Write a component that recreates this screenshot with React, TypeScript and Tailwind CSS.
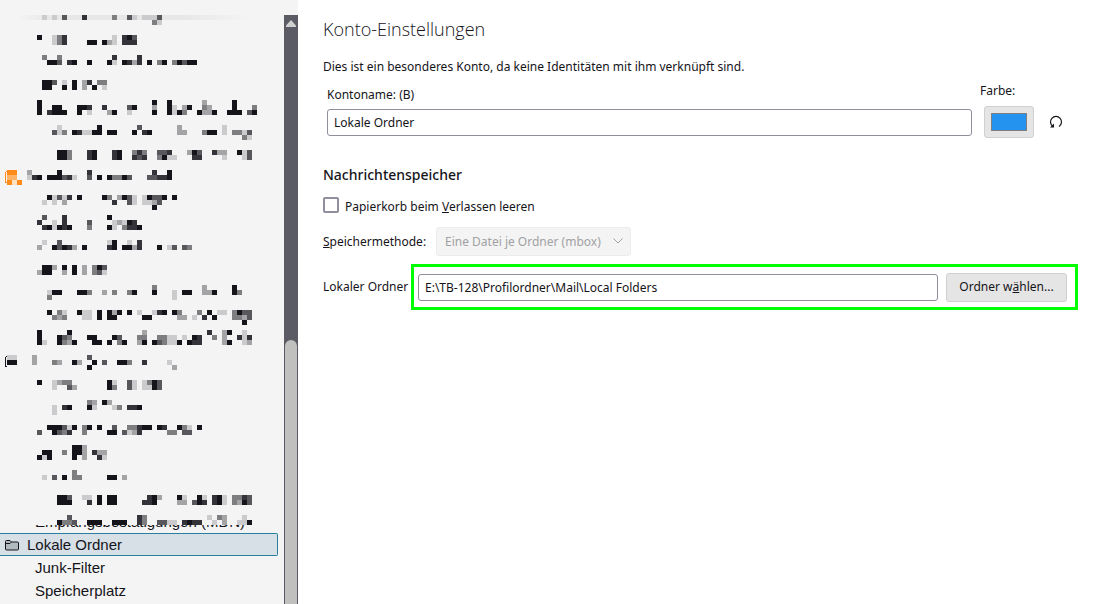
import { useState } from "react";

const shades: Record<string, string> = {
    a: "#15141a",
    b: "#343339",
    c: "#58575c",
    d: "#7e7e80",
    e: "#a4a4a6",
    f: "#cbcbcd",
    o: "#ff8c1a",
    p: "#ffb366",
    q: "#ffe0c2",
};

// One entry per mosaic row: [row, "column + shades ..."], every cell is 5 x 5
const mosaic: [number, string][] = [
    [0, "8f 10f 12c 16b 22d 25cf 28fff 31c"],
    [1, "30df"],
    [4, "7a 10fdb 22f 24bac"],
    [5, "10fdb 17aa 20aef 24bbb"],
    [8, "8d 11d 22b 27b"],
    [9, "9aac 13ba 17a 21af 24abeb 29a 31da 34dacaa"],
    [13, "8aac 12f 14a 16eb 19dd"],
    [14, "8aa 12a 14a 16e 18a 20f"],
    [17, "7a 30a 33a 40e 46a"],
    [18, "7a 10aa 15aab 20b 25ca 30e 33af 36ea 40de 46a 50d"],
    [19, "7a 9baaa 15a 17f 21ea 25f 30a 33afad 39aeea 45aaa 49ca"],
    [22, "11f 19a 27c 35e 44f"],
    [23, "10cfd 14abffaa 21aa 26a 28ba 35ee 40daa 44f 46ddfc"],
    [24, "48df"],
    [27, "11aad 17ba 22ba 26dbd 31ccb 37eac 42bee 47afc"],
    [28, "11aad 17ba 22ba 26bcb 31daff 38bb 44f 48fc"],
    [31, "1oo 5e 11a 17b 30b 33a"],
    [32, "1pp 5fba 9aaacbf 17c 19a 21addac 29ccbba"],
    [33, "1oqo"],
    [36, "9afcfb 15a 20ad 23eacf 28facca 34a"],
    [37, "8f 10f 12e 22b 25cf 28ffec"],
    [38, "30a"],
    [40, "8c 12b 21a"],
    [41, "7b 10f 12b 17c 22fefab"],
    [42, "8bafaba 17d 21af 24dbba"],
    [45, "8f 11c 21fa 25f 27b"],
    [46, "7e 10acabe 16a 21ba 24aaeb 31a 33fc 36cd"],
    [50, "8aae 12a 14a 16e 18dac"],
    [51, "7eaa 12e 14a 16e 18dcf"],
    [54, "30d 40e 46a"],
    [55, "9faa 15aad 20e 22d 25da 30a 34f 36aa 40eea 46ad"],
    [56, "9d 34f"],
    [59, "9a 11df 15aff 19a 21aea 25a 27f 30fba 34ad 39d 41a 43ff 46dacc"],
    [60, "10ded 16ff 19a 21aa 28aa 35ee 38f 40b 42a 46ddec"],
    [61, "48a"],
    [63, "7a 13a 28e 41b 44ea 48f"],
    [64, "7a 11acd 17aa 22ac 27dd 31ddff 36f 38ab 42d 44e 47bfb"],
    [65, "7af 11adea 18aa 21a 23da 27ea 30acdffa 37abb 44ea 48fe"],
    [68, "1ff 6e 17c"],
    [69, "1aa 6e 10de 14ae 18a 20c 23aad 28b 33f"],
    [70, "17a 34e"],
    [73, "7a 10fedd 21af 25cf 28fdac"],
    [74, "10f 13ce 21ad 25cf 28ffac"],
    [77, "17de 20ae"],
    [78, "10f 12ba 17af 22fd 25bba"],
    [79, "10f"],
    [82, "9aaacfa 16da 19a 22c 25ddbaa 31ab 35adf 39a"],
    [83, "7c 10acdb 16d 21aa 24cfeb 33dd 36cc"],
    [86, "14aae"],
    [87, "8aa 12d 14aae 18bee"],
    [88, "7afa 14a 16e 19bf"],
    [91, "14d"],
    [92, "8f 10c 12a 14dd 21aa 24e"],
    [96, "11aac 16ff 19a 21aa 29bae 35af 39af 42baf 46ddbc"],
    [97, "11aaa 17b 19a 21aa 28bba 35ee 38cab 42baf 46deac"],
    [100, "13c 27bd 41f 43de 48f"],
    [101, "11addc 17aaa 22aaa 27bd 31ccff 36babb 42f 44e 47ffa"],
];

const cells = mosaic.flatMap(([row, line]) =>
    line.split(" ").flatMap((run) => {
        const start = parseInt(run, 10);
        return run.replace(/\d+/, "").split("").map((shade, i) => ({ x: 2 + (start + i) * 5, y: row * 5, fill: shades[shade] }));
    })
);

function Mosaic() {
    return (
        <svg className="block shrink-0" width="278" height="510" shapeRendering="crispEdges" aria-hidden="true">
            <defs>
                <linearGradient id="band">
                    <stop offset="0" stopColor="#f4f4f4" />
                    <stop offset="0.15" stopColor="#e7e7e7" />
                    <stop offset="0.7" stopColor="#e7e7e7" />
                    <stop offset="1" stopColor="#f4f4f4" />
                </linearGradient>
            </defs>
            <rect x="17" y="0" width="235" height="5" fill="url(#band)" />
            {cells.map((c) => (
                <rect key={`${c.x}-${c.y}`} x={c.x} y={c.y} width="5" height="5" fill={c.fill} />
            ))}
            <path d="M7 156.500Q5.500 156.500 5.500 158V166Q5.500 167.500 7 167.500" fill="none" stroke="#ff8c1a" />
            <path d="M7 341.500Q5.500 341.500 5.500 343V350Q5.500 351.500 7 351.500" fill="none" stroke="#15141a" />
        </svg>
    );
}

function FolderIcon() {
    return (
        <svg className="shrink-0" width="14" height="12" viewBox="0 0 14 12" fill="#b1bac0" stroke="#15141a" aria-hidden="true">
            <path d="M.5 10v-7.500a1 1 0 0 1 1-1h3.500l1.500 1.500h6a1 1 0 0 1 1 1v6a1 1 0 0 1-1 1h-11a1 1 0 0 1-1-1z" />
            <path d="M.5 4.500h4.500l1.500-1.500" fill="none" />
        </svg>
    );
}

function Sidebar() {
    return (
        <aside className="flex w-[298px] shrink-0 bg-[#f4f4f4] pt-[15px]">
            <nav className="flex min-w-0 grow flex-col font-['Liberation_Sans',sans-serif] text-[15px] leading-[23px]">
                <Mosaic />
                {/* only the lower edge of this entry shows below the mosaic */}
                <div className="flex h-2 items-end overflow-hidden pl-[35px]">
                    <a href="#mdn" className="whitespace-nowrap">Empfangsbestätigungen (MDN)</a>
                </div>
                <a href="#lokal" className="mr-1.5 flex h-[23px] items-center gap-2 rounded-r-xs border border-l-0 border-[#2a7f9e] bg-[#d7e0e7] pl-[5px]">
                    <FolderIcon />
                    Lokale Ordner
                </a>
                <a href="#junk" className="pl-[35px]">Junk-Filter</a>
                <a href="#speicher" className="pl-[35px]">Speicherplatz</a>
            </nav>
            <div className="flex w-3.5 shrink-0 flex-col bg-[#5b5b66]">
                <svg className="mx-auto mt-[5px]" width="10" height="7" fill="#d0d0d0" aria-hidden="true">
                    <path d="M5 0L10 5.500V7H0V5.500z" />
                </svg>
                <div className="mx-px mt-[313px] grow rounded-t-md bg-[#c0c0bf]" />
            </div>
        </aside>
    );
}

export default function App() {
    const [name, setName] = useState("Lokale Ordner");
    const [folder, setFolder] = useState("E:\\TB-128\\Profilordner\\Mail\\Local Folders");
    const [color, setColor] = useState("#2493ef");

    return (
        <div className="flex h-screen overflow-hidden bg-white text-[#15141a]">
            <Sidebar />

            <main className="min-w-0 grow pt-[15px] pr-[33px] pl-[25px] font-['Noto_Sans',sans-serif] text-xs leading-5">
                <h1 className="font-['Open_Sans',sans-serif] text-[18px] leading-7 font-light">Konto-Einstellungen</h1>
                <p className="mt-3.5">Dies ist ein besonderes Konto, da keine Identitäten mit ihm verknüpft sind.</p>

                <div className="flex pr-3.5 pl-1">
                    <div className="flex grow flex-col pt-2">
                        <label htmlFor="name">Kontoname: (B)</label>
                        <input
                            id="name"
                            type="text"
                            value={name}
                            onChange={(e) => setName(e.target.value)}
                            className="mt-1 h-[27px] rounded-[3px] border border-[#8f8f9d] px-1.5 outline-none"
                        />
                    </div>
                    <div className="ml-2 flex flex-col pt-1">
                        <label htmlFor="color">Farbe:</label>
                        <div className="mt-[5px] flex items-center gap-3.5 pl-1">
                            <div className="flex h-8 w-[50px] items-center justify-center rounded-[3px] border border-[#d0d0d0] bg-[#e5e5e5]">
                                <input
                                    id="color"
                                    type="color"
                                    value={color}
                                    onChange={(e) => setColor(e.target.value)}
                                    className="h-[18px] w-9 [&::-webkit-color-swatch]:rounded-none [&::-webkit-color-swatch]:border-[#7f7f7f] [&::-webkit-color-swatch-wrapper]:p-0"
                                />
                            </div>
                            <button aria-label="Farbe zurücksetzen" onClick={() => setColor("#2493ef")}>
                                <svg width="16" height="16" viewBox="0 0 16 16" fill="none" stroke="#15141a">
                                    <path d="M5 12.500A5.500 5.500 0 1 1 11 12.500" strokeWidth="1.200" />
                                    <path d="M2 13.500h4v-4z" fill="#15141a" stroke="none" />
                                </svg>
                            </button>
                        </div>
                    </div>
                </div>

                <h2 className="mt-[27px] text-sm leading-5 font-medium">Nachrichtenspeicher</h2>
                <div className="mt-3 flex items-start gap-1.5">
                    <input id="trash" type="checkbox" className="size-4 appearance-none rounded-xs border-2 border-[#8f8f9d]" />
                    <label htmlFor="trash">
                        Papierkorb beim <u>V</u>erlassen leeren
                    </label>
                </div>
                <div className="mt-2.5 flex items-center">
                    <label htmlFor="store" className="w-[113px] shrink-0">
                        <u>S</u>peichermethode:
                    </label>
                    <div className="relative">
                        <select id="store" disabled className="h-[29px] w-[195px] appearance-none rounded-[3px] border border-[#ececec] bg-[#f4f4f4] px-2 text-[#a1a1a3]">
                            <option>Eine Datei je Ordner (mbox)</option>
                        </select>
                        <svg className="pointer-events-none absolute top-2.5 right-2" width="10" height="8" fill="none" stroke="#a1a1a3" aria-hidden="true">
                            <path d="M.5 1.500L5 6L9.500 1.500" />
                        </svg>
                    </div>
                </div>
                <div className="mt-2 flex items-center">
                    <label htmlFor="folder" className="w-[88px] shrink-0 whitespace-nowrap">
                        Lokaler Ordner
                    </label>
                    <div className="flex h-[46px] grow items-center gap-2 border-[3px] border-[#00ff00] pr-2 pl-1">
                        <input
                            id="folder"
                            type="text"
                            value={folder}
                            onChange={(e) => setFolder(e.target.value)}
                            className="h-[27px] min-w-0 grow rounded-[3px] border border-[#8f8f9d] px-1.5 outline-none"
                        />
                        <button className="h-[29px] w-[121px] rounded-[3px] border border-[#d0d0d0] bg-[#e5e5e5]">
                            Ordner w<u>ä</u>hlen...
                        </button>
                    </div>
                </div>
            </main>
        </div>
    );
}
